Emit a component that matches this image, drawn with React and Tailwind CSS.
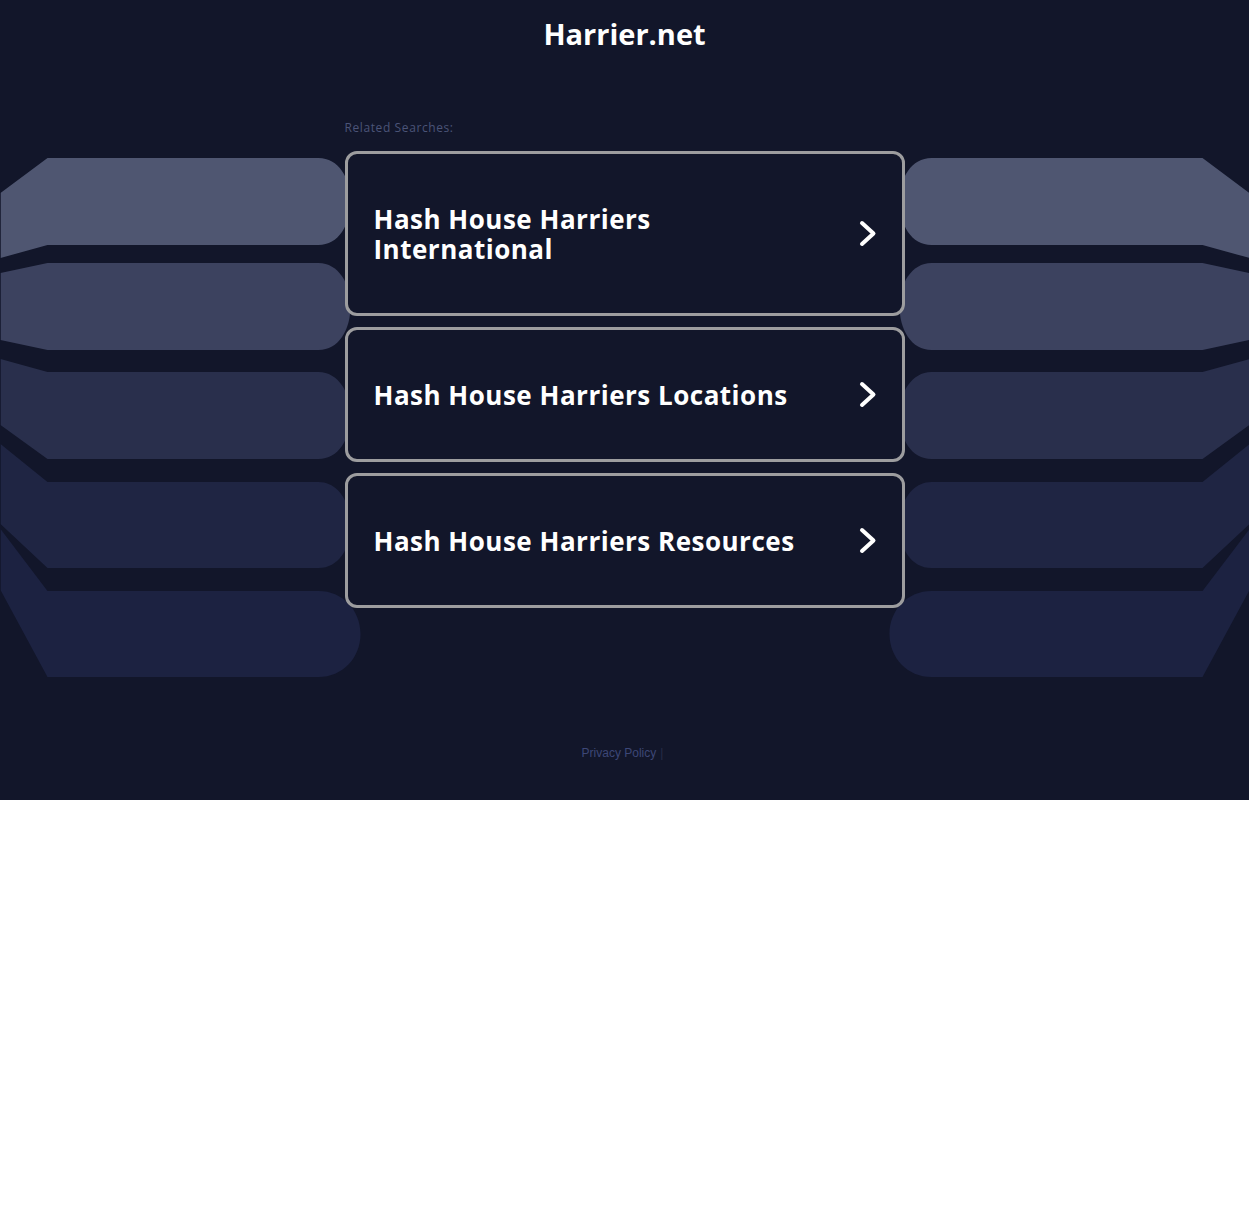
import React from "react";

const searches = [
  { label: "Hash House Harriers International", width: "max-w-[300px]", tall: true },
  { label: "Hash House Harriers Locations" },
  { label: "Hash House Harriers Resources" },
];

// left-hand bands, the right side is the mirror image
const bands = [
  { d: "M0,193 L47,158 L318,158 C338,158 350,178 350,201 C350,225 338,245 318,245 L47,245 L0,258 Z", fill: "#4f5671" },
  { d: "M0,273 L47,263 L318,263 C338,263 350,284 350,306 C350,330 338,350 318,350 L47,350 L0,340 Z", fill: "#3c425f" },
  { d: "M0,359 L47,372 L318,372 C338,372 350,393 350,415 C350,439 338,459 318,459 L47,459 L0,425 Z", fill: "#292f4c" },
  { d: "M0,444 L47,482 L318,482 C338,482 350,503 350,525 C350,549 338,568 318,568 L47,568 L0,524 Z", fill: "#1f2543" },
  { d: "M0,529 L47,591 L318,591 C342,591 360,610 360,634 C360,658 342,677 318,677 L47,677 L0,590 Z", fill: "#1c2241" },
];

function Chevron() {
  return (
    <svg width="18" height="27" viewBox="0 0 18 27" fill="none" className="shrink-0">
      <path d="M3 3 L14.5 13.5 L3 24" stroke="#fff" strokeWidth="4" strokeLinecap="round" strokeLinejoin="round" />
    </svg>
  );
}

export default function App() {
  return (
    <div className="relative h-[800px] w-full overflow-hidden bg-[#12162a]">
      <svg
        className="absolute left-1/2 top-0 -translate-x-1/2"
        width="1249"
        height="800"
        viewBox="0 0 1249 800"
      >
        {bands.map((b, i) => (
          <g key={i}>
            <path d={b.d} fill={b.fill} />
            <path d={b.d} fill={b.fill} transform="translate(1249,0) scale(-1,1)" />
          </g>
        ))}
      </svg>

      <div className="relative flex flex-col items-center">
        <h1
          className="pt-[15px] text-[29px] font-bold leading-[38px] text-white"
          style={{ fontFamily: "'Open Sans', sans-serif" }}
        >
          Harrier.net
        </h1>

        <div className="mt-[67px] w-[560px]">
          <p
            className="mb-[15px] text-[12px] leading-[16px] tracking-[0.6px] text-[#4b5478]"
            style={{ fontFamily: "'Open Sans', sans-serif" }}
          >
            Related Searches:
          </p>
          <div className="flex flex-col gap-[11px]">
            {searches.map((s, i) => (
              <a
                key={i}
                href="#"
                className={`flex items-center justify-between rounded-[12px] border-[3px] border-[#9d9d9f] bg-[#12162a] pl-[26px] pr-[25px] ${
                  s.tall ? "h-[165px]" : "h-[135px]"
                }`}
              >
                <span
                  className={`text-[26px] font-bold leading-[30px] tracking-[0.5px] text-white ${s.width || ""}`}
                  style={{ fontFamily: "'Open Sans', sans-serif" }}
                >
                  {s.label}
                </span>
                <Chevron />
              </a>
            ))}
          </div>
        </div>

        <div
          className="mt-[137px] pr-[4px] text-[12px] leading-[16px]"
          style={{ fontFamily: "'Liberation Sans', Arial, sans-serif" }}
        >
          <a href="#" className="text-[#3d4777]">
            Privacy Policy
          </a>
          <span className="ml-[4px] text-[#262c48]">|</span>
        </div>
      </div>
    </div>
  );
}
